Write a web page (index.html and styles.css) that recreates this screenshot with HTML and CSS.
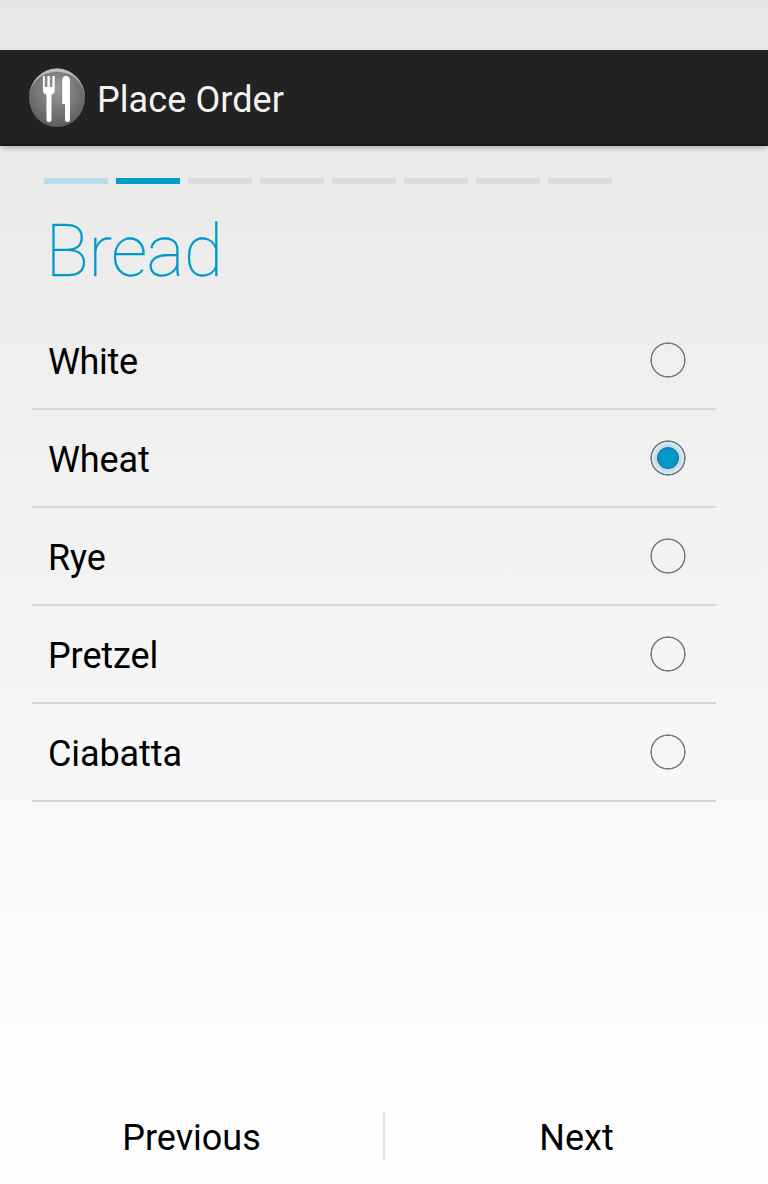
FILE: index.html
```html
<!DOCTYPE html>
<html lang="en">
<head>
<meta charset="utf-8">
<title>Place Order</title>
<link rel="stylesheet" href="styles.css">
</head>
<body>
<div class="status"></div>
<header class="bar">
<svg class="logo" width="58" height="60" viewBox="0 0 58 60">
<defs>
<radialGradient id="face" cx=".5" cy=".35" r=".65"><stop offset="0" stop-color="#9c9a99"/><stop offset="1" stop-color="#5f5d5b"/></radialGradient>
<linearGradient id="rim" x1="0" y1="0" x2="0" y2="1"><stop offset="0" stop-color="#c2c2c2"/><stop offset="1" stop-color="#858585"/></linearGradient>
</defs>
<ellipse cx="29" cy="29.8" rx="28" ry="29.3" fill="url(#face)"/>
<path d="M1 29.8a28 29.3 0 0 1 56 0C54 -5 4 -5 1 29.8z" fill="url(#rim)"/>
<path d="M15 8h1.8v11h2.6V8h2.4v11h2.6V8h2.3v14.5q0 3.5-3.2 4V51.500a2.500 2.500 0 0 1-5 0V26.500q-3.500-.5-3.500-4z" fill="#fff"/>
<path d="M34.200 12.500Q34.200 8 38 8t4 4.500v39a2.500 2.500 0 0 1-5 0V36h-2.800z" fill="#fff"/>
</svg>
<h1 class="bar-title">Place Order</h1>
</header>
<main class="page">
<div class="steps"><i class="step done"></i><i class="step current"></i><i class="step"></i><i class="step"></i><i class="step"></i><i class="step"></i><i class="step"></i><i class="step"></i></div>
<h2 class="title">Bread</h2>
<ul class="list">
<li class="row"><span class="label tight">White</span><i class="radio"></i></li>
<li class="row"><span class="label">Wheat</span><i class="radio checked"></i></li>
<li class="row"><span class="label">Rye</span><i class="radio"></i></li>
<li class="row"><span class="label">Pretzel</span><i class="radio"></i></li>
<li class="row"><span class="label">Ciabatta</span><i class="radio"></i></li>
</ul>
</main>
<footer class="nav"><button class="btn">Previous</button><i class="sep"></i><button class="btn">Next</button></footer>
</body>
</html>
```

FILE: styles.css
```css
* { box-sizing: border-box; }
body { margin: 0; height: 1184px; display: flex; flex-direction: column; background: linear-gradient(#e7e7e7, #fefefe 1100px); font-family: Roboto, sans-serif; color: #000; }
.status { height: 50px; }
.bar { height: 96px; background: #222; border-bottom: 2px solid #181818; box-shadow: 0 3px 5px -1px rgba(0,0,0,.25); display: flex; align-items: center; padding-left: 28px; }
.logo { display: block; margin-top: 2px; }
.bar-title { margin: 6px 0 0 11px; font-size: 36px; font-weight: 400; line-height: 42px; letter-spacing: .08px; color: #f3f3f3; }
.page { flex: 1; padding: 32px 52px 0 32px; }
.steps { display: flex; gap: 8px; padding-left: 12px; }
.step { width: 64px; height: 6px; background: #dbdbdb; }
.done { background: #b8dde9; }
.current { background: #0099cc; }
.title { margin: 26px 0 18px 13.5px; height: 84px; line-height: 84px; font-size: 72px; font-weight: 100; letter-spacing: -.7px; -webkit-text-stroke: .3px #0099cc; color: #0099cc; }
.list { list-style: none; margin: 0; padding: 0; }
.row { height: 98px; padding: 0 30px 0 16px; border-bottom: 2px solid #d7d7d7; display: flex; justify-content: space-between; align-items: center; font-size: 36px; }
.label { padding-top: 4px; letter-spacing: -.1px; }
.tight { letter-spacing: -.35px; }
.radio { width: 36px; height: 36px; border-radius: 50%; background: radial-gradient(circle closest-side, transparent 15.800px, #777 16.500px, #777 17.200px, transparent 18px); }
.checked { background: radial-gradient(circle closest-side, #0099cc 9px, #28799a 9.900px, #28799a 10.500px, #b3dcec 11.300px, #e0ebef 15.800px, #6c7579 16.500px, #6c7579 17.200px, transparent 18px); }
.nav { height: 96px; display: flex; align-items: center; }
.btn { flex: 1; border: 0; background: none; font: 36px Roboto, sans-serif; padding: 4px 0 0; color: #000; }
.sep { width: 2px; height: 48px; background: #e0e0e0; }
```
